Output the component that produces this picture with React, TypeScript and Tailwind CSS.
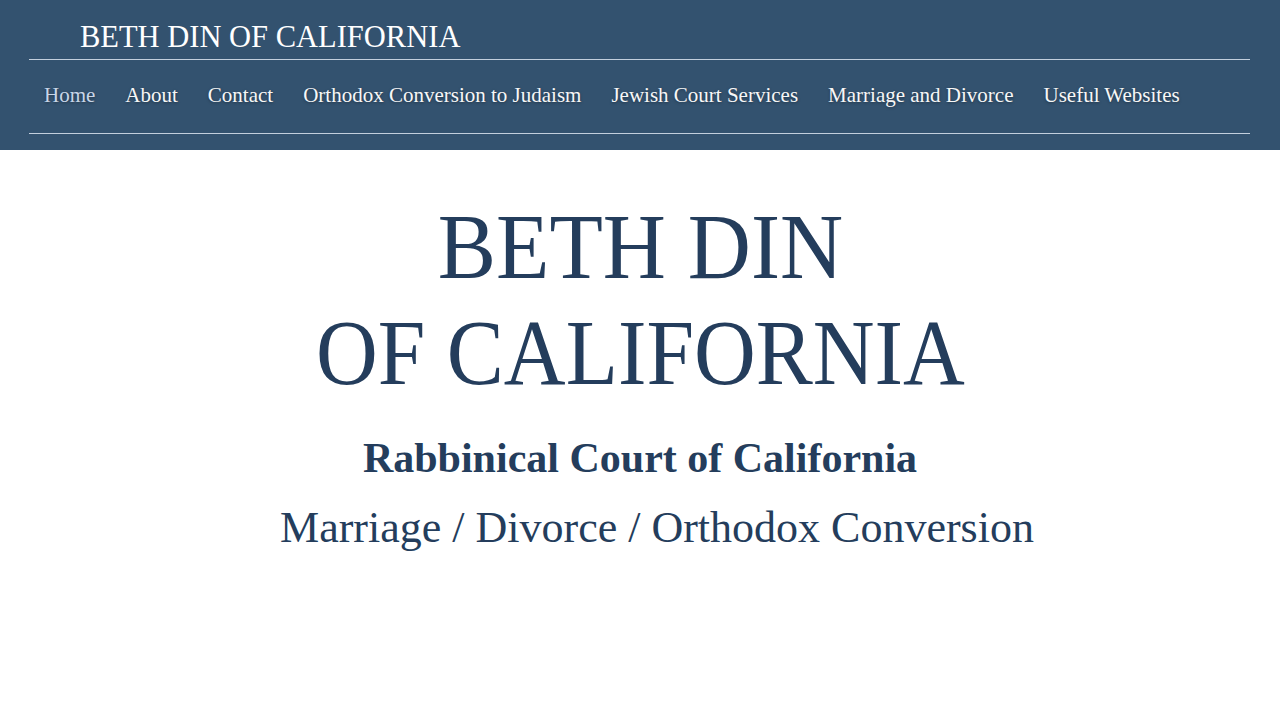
import React from "react";

const navItems = [
  "Home",
  "About",
  "Contact",
  "Orthodox Conversion to Judaism",
  "Jewish Court Services",
  "Marriage and Divorce",
  "Useful Websites",
];

export default function App() {
  return (
    <div className="min-h-[720px] w-full bg-white font-['Liberation_Serif','Times_New_Roman',serif]">
      <header className="h-[150px] bg-[#33526f] pl-[29px] pr-[30px]">
        <div className="h-[60px] border-b border-[#c3cfdd] pl-[51px] pt-[22px]">
          <div className="text-[30.5px] leading-[30px] text-white whitespace-nowrap">
            BETH DIN OF CALIFORNIA
          </div>
        </div>
        <nav className="h-[74px] border-b border-[#c3cfdd] pt-[25px]">
          <ul className="flex">
            {navItems.map((item, i) => (
              <li
                key={item}
                className={
                  "px-[15px] text-[21px] leading-[21px] whitespace-nowrap [text-shadow:0_1px_3px_rgba(0,0,0,0.35)] " +
                  (i === 0 ? "text-[#c8d6e8]" : "text-[#f7f7f7]")
                }
              >
                {item}
              </li>
            ))}
          </ul>
        </nav>
      </header>
      <main className="flex flex-col items-center text-[#243d5c]">
        <h1 className="mt-[43px] text-center text-[94px] leading-[106px] font-normal whitespace-nowrap">
          <span className="block scale-x-[0.93]">BETH DIN</span>
          <span className="block scale-x-[0.91]">OF CALIFORNIA</span>
        </h1>
        <h2 className="mt-[32px] text-center text-[42px] leading-[42px] font-bold whitespace-nowrap">
          Rabbinical Court of California
        </h2>
        <p className="mt-[27px] pl-[34px] text-center text-[44px] leading-[44px] whitespace-nowrap">
          Marriage / Divorce / Orthodox Conversion
        </p>
      </main>
    </div>
  );
}
